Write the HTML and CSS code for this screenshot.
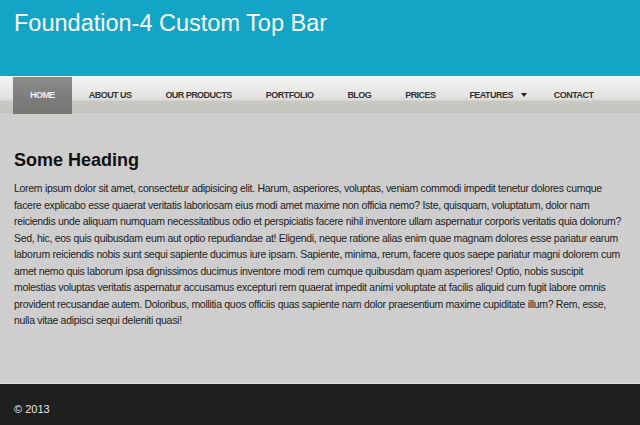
FILE: index.html
```html
<!DOCTYPE html>
<html>
<head>
<meta charset="utf-8">
<link rel="stylesheet" href="styles.css">
</head>
<body>
<header class="site-header">
  <h1 class="site-title">Foundation-4 Custom Top Bar</h1>
</header>
<nav class="top-bar">
  <ul class="menu">
    <li class="menu-item active">HOME</li>
    <li class="menu-item">ABOUT US</li>
    <li class="menu-item">OUR PRODUCTS</li>
    <li class="menu-item">PORTFOLIO</li>
    <li class="menu-item">BLOG</li>
    <li class="menu-item">PRICES</li>
    <li class="menu-item has-dropdown">FEATURES<span class="caret"></span></li>
    <li class="menu-item">CONTACT</li>
  </ul>
</nav>
<main class="content">
  <h2 class="heading">Some Heading</h2>
  <p class="text">Lorem ipsum dolor sit amet, consectetur adipisicing elit. Harum, asperiores, voluptas, veniam commodi impedit tenetur dolores cumque facere explicabo esse quaerat veritatis laboriosam eius modi amet maxime non officia nemo? Iste, quisquam, voluptatum, dolor nam reiciendis unde aliquam numquam necessitatibus odio et perspiciatis facere nihil inventore ullam aspernatur corporis veritatis quia dolorum? Sed, hic, eos quis quibusdam eum aut optio repudiandae at! Eligendi, neque ratione alias enim quae magnam dolores esse pariatur earum laborum reiciendis nobis sunt sequi sapiente ducimus iure ipsam. Sapiente, minima, rerum, facere quos saepe pariatur magni dolorem cum amet nemo quis laborum ipsa dignissimos ducimus inventore modi rem cumque quibusdam quam asperiores! Optio, nobis suscipit molestias voluptas veritatis aspernatur accusamus excepturi rem quaerat impedit animi voluptate at facilis aliquid cum fugit labore omnis provident recusandae autem. Doloribus, mollitia quos officiis quas sapiente nam dolor praesentium maxime cupiditate illum? Rem, esse, nulla vitae adipisci sequi deleniti quasi!</p>
</main>
<footer class="site-footer">
  <span class="copy">&copy; 2013</span>
</footer>
</body>
</html>
```
FILE: styles.css
```css
* { box-sizing: border-box; }
html, body { margin: 0; padding: 0; }
body {
  width: 640px;
  height: 425px;
  overflow: hidden;
  font-family: "Liberation Sans", Arial, sans-serif;
  background: #cecece;
  display: flex;
  flex-direction: column;
}
.site-header {
  background: #12a5c6;
  height: 76px;
  padding: 9px 14px 0;
}
.site-title {
  margin: 0;
  font-weight: normal;
  font-size: 23.5px;
  line-height: 28px;
  color: #ffffff;
}
.top-bar {
  height: 37px;
  border-top: 1px solid #f8f8f8;
  background: linear-gradient(to bottom, #f3f3f3 0%, #e3e3e1 55%, #d8d8d4 65%, #c9c9c3 66%, #c4c4be 100%);
  padding-left: 13px;
}
.menu {
  list-style: none;
  margin: 0;
  padding: 0;
  display: flex;
  height: 100%;
}
.menu-item {
  display: flex;
  align-items: center;
  padding: 0 17px 1px;
  height: 100%;
  font-size: 9px;
  letter-spacing: -0.55px;
  font-weight: bold;
  color: #333333;
}
.menu-item.active {
  background: linear-gradient(to bottom, #8b8b89 0%, #7c7c7a 60%, #757571 100%);
  color: #eeeeee;
  height: 37px;
}
.caret {
  width: 0;
  height: 0;
  border-left: 3px solid transparent;
  border-right: 3px solid transparent;
  border-top: 4px solid #222222;
  margin-left: 8px;
  margin-right: -7px;
}
.content {
  flex: 1;
  padding: 36px 14px 0 14px;
}
.heading {
  margin: 0 0 9px;
  font-size: 18px;
  line-height: 22px;
  font-weight: bold;
  color: #111111;
}
.text {
  margin: 0;
  font-size: 10.5px;
  letter-spacing: -0.3px;
  line-height: 16.5px;
  color: #222222;
}
.site-footer {
  height: 42px;
  border-top: 1px solid #dcdcdc;
  background: #1f1f1f;
  padding: 15px 14px 0;
}
.copy {
  font-size: 11px;
  line-height: 14px;
  color: #e6e6e6;
}
```
